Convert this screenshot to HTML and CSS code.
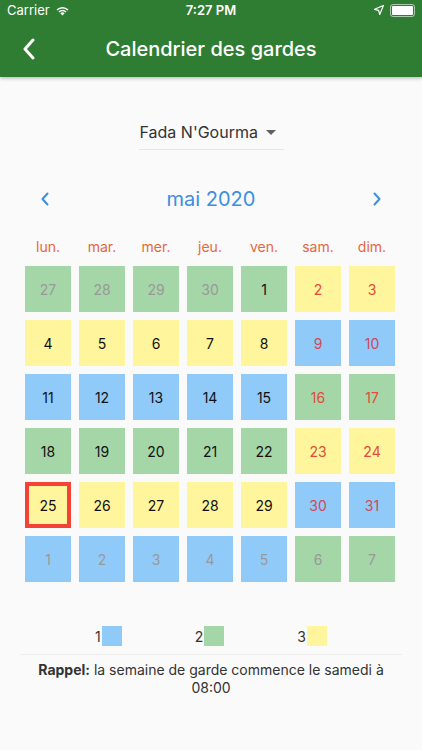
FILE: index.html
```html
<!DOCTYPE html>
<html lang="fr">
<head>
  <meta charset="UTF-8" />
  <meta name="viewport" content="width=device-width, initial-scale=1.0"/>
  <title>Calendrier des gardes</title>
  <link rel="stylesheet" href="styles.css">
</head>
<body>

<header class="topbar">
  <div class="status">
    <span class="carrier">Carrier
      <svg class="wifi" viewBox="0 0 16 12" width="15" height="11">
        <path d="M8 11.5 L5.6 9 A3.4 3.4 0 0 1 10.4 9 Z" fill="#fff"/>
        <path d="M3.6 7 A6.2 6.2 0 0 1 12.4 7 L11.2 8.2 A4.5 4.5 0 0 0 4.8 8.2 Z" fill="#fff"/>
        <path d="M1.4 4.8 A9.3 9.3 0 0 1 14.6 4.8 L13.4 6 A7.6 7.6 0 0 0 2.6 6 Z" fill="#fff"/>
      </svg>
    </span>
    <span class="clock">7:27 PM</span>
    <span class="right">
      <svg viewBox="0 0 10 10" width="10" height="10">
        <path d="M9.5 0.5 L0.5 4.3 L4.6 5.4 L5.7 9.5 Z" fill="none" stroke="#fff" stroke-width="1.2" stroke-linejoin="round"/>
      </svg>
      <span class="battery"><span class="level"></span></span>
    </span>
  </div>
  <div class="appbar">
    <svg class="back" viewBox="0 0 14 22" width="14" height="22">
      <path d="M11 2 L3 11 L11 20" fill="none" stroke="#fff" stroke-width="3" stroke-linecap="round" stroke-linejoin="round"/>
    </svg>
    <h1>Calendrier des gardes</h1>
  </div>
</header>

<main>
  <div class="picker">
    <span>Fada N'Gourma</span>
    <svg viewBox="0 0 10 5" width="10" height="5"><path d="M0 0 L10 0 L5 5 Z" fill="#616161"/></svg>
  </div>

  <div class="month">
    <svg viewBox="0 0 8 14" width="8" height="14"><path d="M6.5 1.5 L1.5 7 L6.5 12.5" fill="none" stroke="#3b8fe0" stroke-width="2" stroke-linecap="round" stroke-linejoin="round"/></svg>
    <span class="title">mai 2020</span>
    <svg viewBox="0 0 8 14" width="8" height="14"><path d="M1.5 1.5 L6.5 7 L1.5 12.5" fill="none" stroke="#3b8fe0" stroke-width="2" stroke-linecap="round" stroke-linejoin="round"/></svg>
  </div>

  <div class="weekdays">
    <span>lun.</span><span>mar.</span><span>mer.</span><span>jeu.</span><span>ven.</span><span>sam.</span><span>dim.</span>
  </div>

  <div class="grid">
    <div class="day g2 out">27</div><div class="day g2 out">28</div><div class="day g2 out">29</div><div class="day g2 out">30</div><div class="day g2">1</div><div class="day g3 we">2</div><div class="day g3 we">3</div>

    <div class="day g3">4</div><div class="day g3">5</div><div class="day g3">6</div><div class="day g3">7</div><div class="day g3">8</div><div class="day g1 we">9</div><div class="day g1 we">10</div>

    <div class="day g1">11</div><div class="day g1">12</div><div class="day g1">13</div><div class="day g1">14</div><div class="day g1">15</div><div class="day g2 we">16</div><div class="day g2 we">17</div>

    <div class="day g2">18</div><div class="day g2">19</div><div class="day g2">20</div><div class="day g2">21</div><div class="day g2">22</div><div class="day g3 we">23</div><div class="day g3 we">24</div>

    <div class="day g3 today">25</div><div class="day g3">26</div><div class="day g3">27</div><div class="day g3">28</div><div class="day g3">29</div><div class="day g1 we">30</div><div class="day g1 we">31</div>

    <div class="day g1 out">1</div><div class="day g1 out">2</div><div class="day g1 out">3</div><div class="day g1 out">4</div><div class="day g1 out">5</div><div class="day g2 out">6</div><div class="day g2 out">7</div>
  </div>

  <div class="legend">
    <span class="item">1<i class="sq g1"></i></span>
    <span class="item">2<i class="sq g2"></i></span>
    <span class="item">3<i class="sq g3"></i></span>
  </div>

  <p class="note"><strong>Rappel:</strong> la semaine de garde commence le samedi à 08:00</p>
</main>

</body>
</html>
```

FILE: styles.css
```css
body {
  margin: 0;
  background: #fafafa;
  font-family: Inter, "Noto Sans", sans-serif;
  color: #212121;
}
.topbar {
  background: #2e7d32;
  color: #fff;
  box-shadow: 0 1px 4px rgba(0, 0, 0, 0.3);
}
.status {
  height: 20px;
  display: flex;
  align-items: center;
  justify-content: space-between;
  padding: 0 7px;
  font-size: 13px;
  position: relative;
}
.carrier {
  display: flex;
  align-items: center;
  gap: 5px;
}
.clock {
  position: absolute;
  left: 0;
  right: 0;
  text-align: center;
  font-weight: 600;
  font-size: 13px;
}
.right {
  display: flex;
  align-items: center;
  gap: 6px;
}
.battery {
  width: 21px;
  height: 9px;
  border: 1px solid rgba(255, 255, 255, 0.6);
  border-radius: 3px;
  padding: 1px;
  display: flex;
}
.battery .level {
  flex: 1;
  background: #fff;
  border-radius: 1px;
}
.appbar {
  height: 57px;
  display: flex;
  align-items: center;
  position: relative;
}
.appbar .back {
  margin-left: 22px;
}
.appbar h1 {
  position: absolute;
  left: 0;
  right: 0;
  margin: 0;
  text-align: center;
  font-size: 20px;
  font-weight: 500;
  pointer-events: none;
}
main {
  padding: 0 25px;
}
.picker {
  width: 145px;
  margin: 45px auto 0;
  display: flex;
  align-items: center;
  justify-content: space-between;
  padding: 0 8px 7px 1px;
  box-sizing: border-box;
  border-bottom: 1px solid #e6e6e6;
  font-size: 16px;
  color: #333;
}
.month {
  display: flex;
  align-items: center;
  justify-content: space-between;
  padding: 0 16px 0 16px;
  margin-top: 37px;
}
.month .title {
  font-size: 20px;
  color: #3b8fe0;
}
.weekdays {
  display: grid;
  grid-template-columns: repeat(7, 46px);
  column-gap: 8px;
  margin-top: 26px;
  font-size: 14px;
  line-height: 20px;
  text-align: center;
  color: #e8673f;
}
.grid {
  display: grid;
  grid-template-columns: repeat(7, 46px);
  grid-auto-rows: 46px;
  gap: 8px;
  margin-top: 9px;
}
.day {
  display: flex;
  align-items: center;
  justify-content: center;
  font-size: 14px;
  color: #111;
  box-sizing: border-box;
}
.g1 { background: #90caf9; }
.g2 { background: #a5d6a7; }
.g3 { background: #fff59d; }
.day.we { color: #e04b3a; }
.day.g1.we { color: #d0495c; }
.day.out { color: #999; }
.day.today { border: 4px solid #f44336; }
.legend {
  display: flex;
  justify-content: center;
  gap: 73px;
  margin-top: 44px;
  padding-bottom: 8px;
  border-bottom: 1px solid #eeeeee;
  margin-left: -5px;
  margin-right: -5px;
  font-size: 14px;
  color: #333;
}
.legend .item {
  display: flex;
  align-items: center;
}
.sq {
  width: 20px;
  height: 20px;
  margin-left: 1px;
}
.note {
  margin: 6px 0 0;
  text-align: center;
  font-size: 14px;
  line-height: 18px;
  color: #333;
}
```
